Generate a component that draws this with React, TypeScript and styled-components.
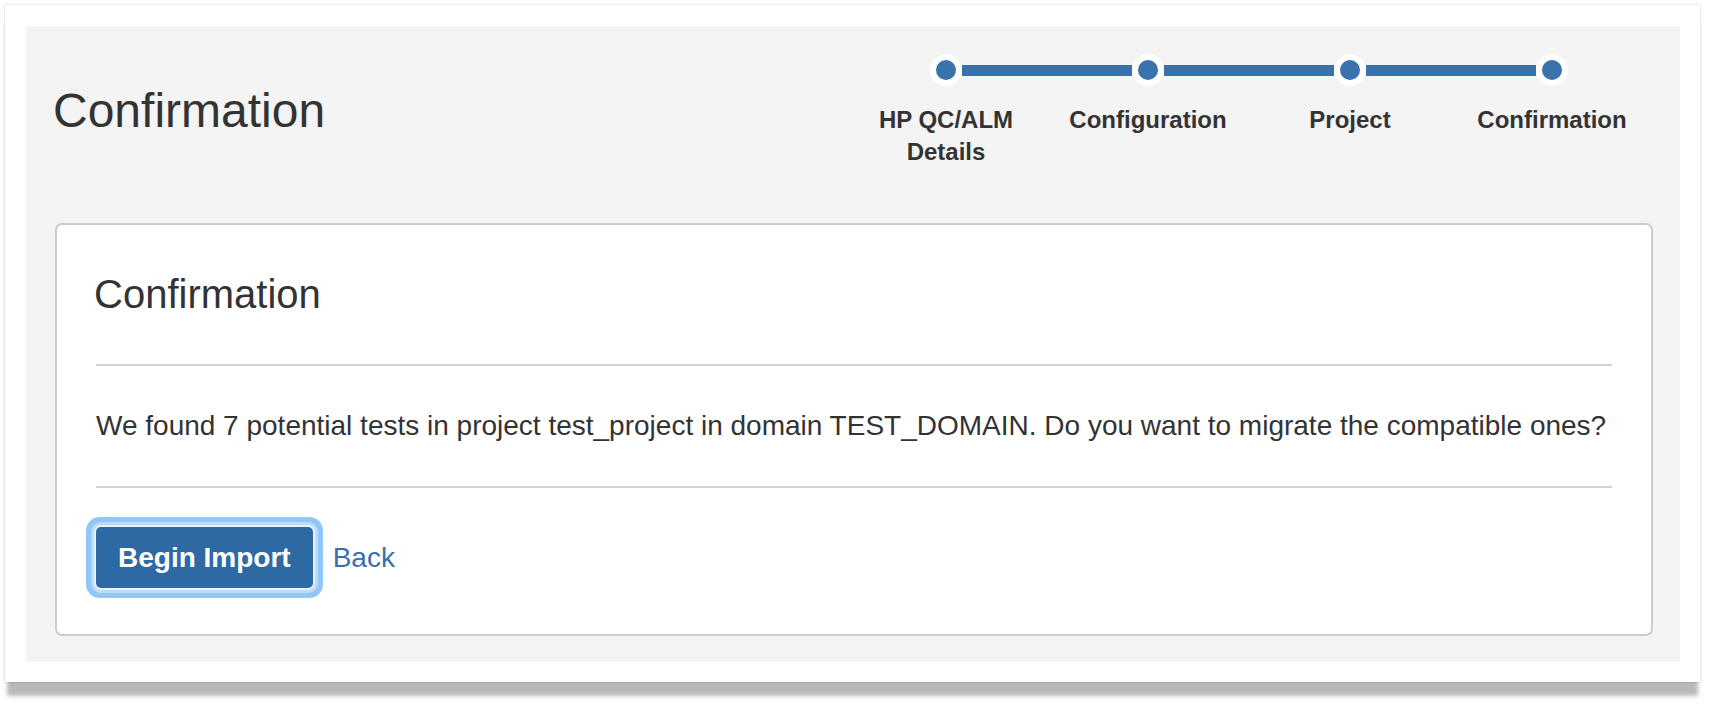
import React from "react";
import styled, { createGlobalStyle } from "styled-components";

const GlobalStyle = createGlobalStyle`
  body {
    margin: 0;
    background: #ffffff;
    font-family: "Liberation Sans", Arial, Helvetica, sans-serif;
    color: #333333;
  }
`;

const steps = ["HP QC/ALM Details", "Configuration", "Project", "Confirmation"];

export default function App() {
  return (
    <>
      <GlobalStyle />
      <Page>
        <Frame>
          <Panel>
            {/* Header with page title and wizard steps */}
            <Header>
              <Title>Confirmation</Title>
              <Stepper>
                {steps.map((label, i) => (
                  <Step key={label}>
                    <DotRow>
                      <Segment $visible={i > 0} />
                      <Dot />
                      <Segment $visible={i < steps.length - 1} />
                    </DotRow>
                    <StepLabel>{label}</StepLabel>
                  </Step>
                ))}
              </Stepper>
            </Header>

            {/* Main card */}
            <Card>
              <CardTitle>Confirmation</CardTitle>
              <Divider />
              <Message>
                We found 7 potential tests in project test_project in domain
                TEST_DOMAIN. Do you want to migrate the compatible ones?
              </Message>
              <Divider />
              <Actions>
                <PrimaryButton type="button">Begin Import</PrimaryButton>
                <LinkButton href="#">Back</LinkButton>
              </Actions>
            </Card>
          </Panel>
        </Frame>
      </Page>
    </>
  );
}

const Page = styled.div`
  padding: 5px 14px 30px 5px;
`;

const Frame = styled.div`
  background: #ffffff;
  padding: 21px 20px 20px 21px;
  box-shadow: 0 0 3px rgba(0, 0, 0, 0.18), 0 16px 4px -2px rgba(0, 0, 0, 0.27);
`;

const Panel = styled.div`
  background: #f4f4f4;
  padding: 0 27px 26px 29px;
`;

const Header = styled.div`
  display: flex;
  justify-content: space-between;
  align-items: flex-start;
  height: 197px;
`;

const Title = styled.h1`
  margin: 59px 0 0 -2px;
  font-size: 48px;
  line-height: 1.1;
  font-weight: normal;
  color: #333333;
`;

const Stepper = styled.div`
  display: grid;
  grid-template-columns: repeat(4, 202px);
  margin-top: 28px;
`;

const Step = styled.div`
  display: flex;
  flex-direction: column;
  align-items: stretch;
`;

const DotRow = styled.div`
  display: flex;
  align-items: center;
  height: 32px;
`;

const Segment = styled.div<{ $visible: boolean }>`
  flex: 1;
  height: 11px;
  background: ${(p) => (p.$visible ? "#3a72ae" : "transparent")};
`;

const Dot = styled.div`
  width: 20px;
  height: 20px;
  border-radius: 50%;
  background: #3a72ae;
  border: 6px solid #ffffff;
  flex-shrink: 0;
`;

const StepLabel = styled.div`
  margin-top: 18px;
  padding: 0 20px;
  text-align: center;
  font-size: 24px;
  line-height: 32px;
  font-weight: bold;
  color: #333333;
`;

const Card = styled.div`
  background: #ffffff;
  border: 2px solid #cccccc;
  border-radius: 7px;
  padding: 47px 39px 46px 39px;
`;

const CardTitle = styled.h2`
  margin: 0 0 0 -2px;
  font-size: 40px;
  line-height: 44px;
  font-weight: normal;
  color: #333333;
`;

const Divider = styled.hr`
  margin: 0;
  border: 0;
  border-top: 2px solid #d2d2d2;
  &:first-of-type {
    margin-top: 48px;
  }
`;

const Message = styled.p`
  margin: 40px 0;
  font-size: 28px;
  line-height: 40px;
  color: #333333;
`;

const Actions = styled.div`
  display: flex;
  align-items: center;
  gap: 20px;
  margin-top: 39px;
`;

const PrimaryButton = styled.button`
  height: 61px;
  padding: 0 22px;
  border: 0;
  border-radius: 5px;
  background: #2d6aa4;
  color: #ffffff;
  font-family: inherit;
  font-size: 28px;
  font-weight: bold;
  box-shadow: 0 0 0 2px #e6f2fe, 0 0 0 5px #bcdcfb, 0 0 0 10px #93c6f8;
  cursor: pointer;
`;

const LinkButton = styled.a`
  font-size: 28px;
  color: #3a70ae;
  text-decoration: none;
`;
